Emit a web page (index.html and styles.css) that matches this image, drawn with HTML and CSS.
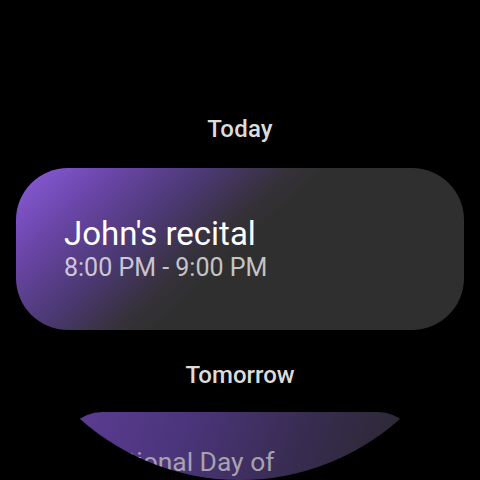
FILE: index.html
```html
<!DOCTYPE html>
<html>
<head>
<meta charset="utf-8">
<link rel="stylesheet" href="styles.css">
</head>
<body>
<div class="screen">
  <div class="header header-today">Today</div>
  <div class="card card-main">
    <div class="title">John's recital</div>
    <div class="time">8:00 PM - 9:00 PM</div>
  </div>
  <div class="header header-tomorrow">Tomorrow</div>
  <div class="card card-next">
    <div class="title">National Day of Remembrance</div>
  </div>
</div>
</body>
</html>
```
FILE: styles.css
```css
html, body {
  margin: 0;
  padding: 0;
  background: #000;
}
.screen {
  width: 480px;
  height: 480px;
  border-radius: 50%;
  overflow: hidden;
  background: #000;
  display: flex;
  flex-direction: column;
  align-items: center;
  font-family: Roboto, "Liberation Sans", sans-serif;
}
.header {
  font-size: 24px;
  line-height: 28px;
  font-weight: 500;
  color: #dcdcdc;
  text-align: center;
  flex: none;
}
.header-today {
  margin-top: 115px;
  letter-spacing: 0.2px;
}
.header-tomorrow {
  margin-top: 31px;
}
.card {
  flex: none;
  width: 448px;
  box-sizing: border-box;
  border-radius: 52px;
  padding: 46px 48px 0 48px;
}
.card-main {
  margin-top: 25px;
  height: 162px;
  background: linear-gradient(137deg, #8c5cdc 0%, #6a46a8 16%, #4a3870 32%, #353139 44%, #2f2f2f 50%, #2f2f2f 100%);
}
.card-next {
  margin-top: 23px;
  height: 200px;
  padding: 43px 48px 0 42px;
  transform: scale(0.8);
  transform-origin: top center;
  background: linear-gradient(112deg, #5e3d96 0%, #4c357c 30%, #372c50 60%, #2a282e 88%);
}
.title {
  font-size: 33px;
  line-height: 40px;
  color: #ffffff;
}
.card-next .title {
  color: #a7a2ae;
}
.time {
  font-size: 25px;
  line-height: 28px;
  font-weight: 400;
  color: rgba(255, 255, 255, 0.72);
}
```
